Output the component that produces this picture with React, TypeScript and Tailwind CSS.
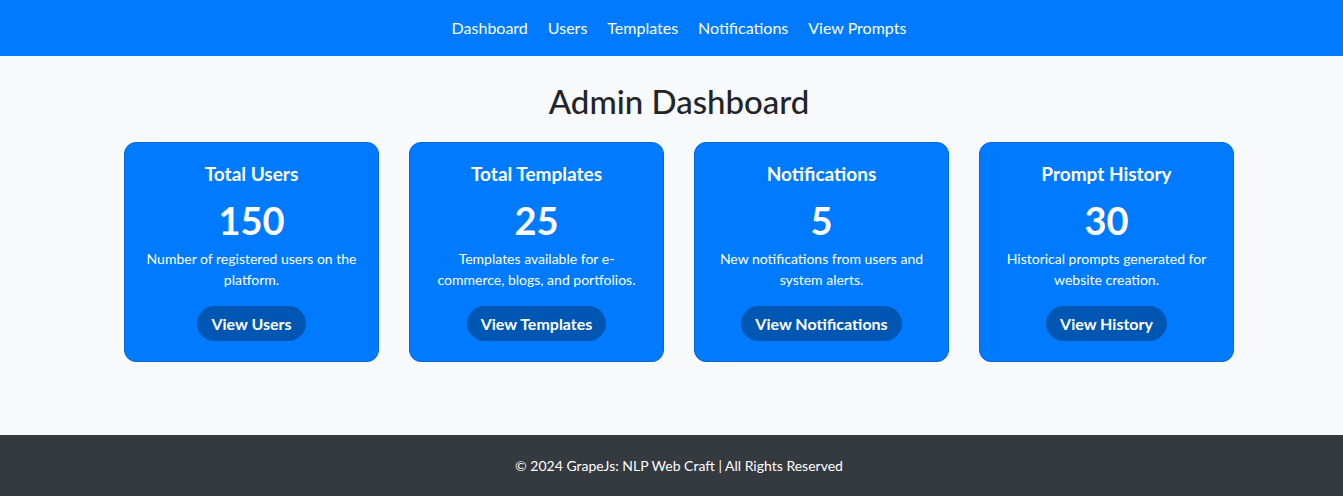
import React from "react";

const cards = [
  { title: "Total Users", value: "150", desc: "Number of registered users on the platform.", btn: "View Users" },
  { title: "Total Templates", value: "25", desc: "Templates available for e-commerce, blogs, and portfolios.", btn: "View Templates" },
  { title: "Notifications", value: "5", desc: "New notifications from users and system alerts.", btn: "View Notifications" },
  { title: "Prompt History", value: "30", desc: "Historical prompts generated for website creation.", btn: "View History" },
];

export default function App() {
  return (
    <div className="min-h-[496px] flex flex-col bg-[#f8f9fa] font-['Lato','Noto_Sans',sans-serif] text-[#212529]">
      <nav className="h-[56px] bg-[#007bff] pl-[15px] flex items-center justify-center gap-[20px] text-white text-[16px]">
        <a className="leading-none">Dashboard</a>
        <a className="leading-none">Users</a>
        <a className="leading-none">Templates</a>
        <a className="leading-none">Notifications</a>
        <a className="leading-none">View Prompts</a>
      </nav>
      <main className="h-[379px] pt-[25px] pl-[15px] flex flex-col items-center">
        <h1 className="text-[33px] font-medium leading-[40px] mb-[21px]">Admin Dashboard</h1>
        <div className="flex gap-[30px]">
          {cards.map((c) => (
            <div
              key={c.title}
              className="w-[255px] h-[220px] bg-[#007bff] border border-[#0069d9] rounded-[12px] px-[20px] pt-[19px] flex flex-col items-center text-white text-center"
            >
              <h3 className="text-[19px] font-bold leading-[24px] mb-[10px]">{c.title}</h3>
              <div className="text-[38px] font-bold leading-[48px] mb-[4px]">{c.value}</div>
              <p className="text-[14px] leading-[21px] h-[42px]">{c.desc}</p>
              <button className="mt-[16px] h-[35px] px-[14px] rounded-full bg-[#0056b3] text-white text-[16px] font-bold">
                {c.btn}
              </button>
            </div>
          ))}
        </div>
      </main>
      <footer className="h-[61px] bg-[#343a40] pl-[15px] flex items-center justify-center text-white text-[14px]">
        © 2024 GrapeJs: NLP Web Craft | All Rights Reserved
      </footer>
    </div>
  );
}
